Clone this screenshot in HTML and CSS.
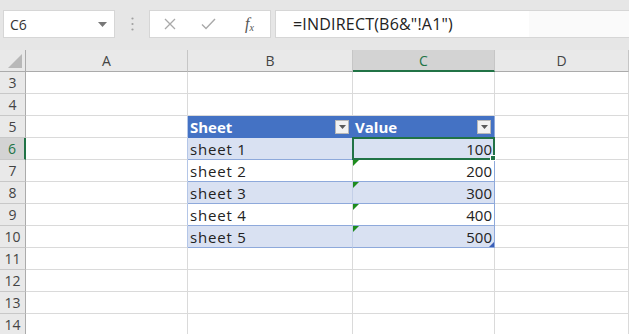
FILE: index.html
```html
<!DOCTYPE html>
<html lang="en">
<head>
<meta charset="utf-8">
<title>INDIRECT example</title>
<link rel="stylesheet" href="styles.css">
</head>
<body>
<div class="app">
  <div class="fbar">
    <div class="namebox">
      <span class="nb-text">C6</span>
      <svg class="nb-caret" width="9" height="5" viewBox="0 0 9 5"><path d="M0 0H9L4.5 5Z" fill="#777"/></svg>
    </div>
    <div class="grip">
      <svg width="3" height="14" viewBox="0 0 3 14"><circle cx="1.5" cy="1.5" r="1.1" fill="#a0a0a0"/><circle cx="1.5" cy="7" r="1.1" fill="#a0a0a0"/><circle cx="1.5" cy="12.5" r="1.1" fill="#a0a0a0"/></svg>
    </div>
    <div class="fxbox">
      <svg class="fx-btn" width="12" height="12" viewBox="0 0 12 12"><path d="M1 1L11 11M11 1L1 11" stroke="#a9a9a9" stroke-width="1.3" fill="none"/></svg>
      <svg class="fx-btn" width="15" height="12" viewBox="0 0 15 12"><path d="M1 6.5L5 10.5L14 1" stroke="#a9a9a9" stroke-width="1.4" fill="none"/></svg>
      <span class="fx-label"><i>f</i><sub>x</sub></span>
    </div>
    <div class="formula">
      <span class="formula-text">=INDIRECT(B6&amp;"!A1")</span>
      <span class="formula-rest"></span>
    </div>
  </div>

  <div class="sheet">
    <div class="c corner"><span class="corner-tri"></span></div>
    <div class="c ch">A</div>
    <div class="c ch">B</div>
    <div class="c ch ch-sel">C</div>
    <div class="c ch">D</div>

    <div class="c rh">3</div><div class="c"></div><div class="c"></div><div class="c"></div><div class="c"></div>
    <div class="c rh">4</div><div class="c"></div><div class="c"></div><div class="c"></div><div class="c"></div>

    <div class="c rh">5</div>
    <div class="c a-edge"></div>
    <div class="c th th-b"><span class="th-label">Sheet</span><span class="dd"><svg width="7" height="4" viewBox="0 0 7 4"><path d="M0 0H7L3.5 4Z" fill="#595959"/></svg></span></div>
    <div class="c th th-c"><span class="th-label">Value</span><span class="dd"><svg width="7" height="4" viewBox="0 0 7 4"><path d="M0 0H7L3.5 4Z" fill="#595959"/></svg></span></div>
    <div class="c"></div>

    <div class="c rh rh-sel">6</div>
    <div class="c a-edge"></div>
    <div class="c tb band">sheet 1</div>
    <div class="c tv band sel">100</div>
    <div class="c"></div>

    <div class="c rh">7</div>
    <div class="c a-edge"></div>
    <div class="c tb">sheet 2</div>
    <div class="c tv err">200</div>
    <div class="c"></div>

    <div class="c rh">8</div>
    <div class="c a-edge"></div>
    <div class="c tb band">sheet 3</div>
    <div class="c tv band err">300</div>
    <div class="c"></div>

    <div class="c rh">9</div>
    <div class="c a-edge"></div>
    <div class="c tb">sheet 4</div>
    <div class="c tv err">400</div>
    <div class="c"></div>

    <div class="c rh">10</div>
    <div class="c a-edge"></div>
    <div class="c tb band last">sheet 5</div>
    <div class="c tv band err last resize">500</div>
    <div class="c"></div>

    <div class="c rh">11</div><div class="c"></div><div class="c"></div><div class="c"></div><div class="c"></div>
    <div class="c rh">12</div><div class="c"></div><div class="c"></div><div class="c"></div><div class="c"></div>
    <div class="c rh">13</div><div class="c"></div><div class="c"></div><div class="c"></div><div class="c"></div>
    <div class="c rh">14</div><div class="c"></div><div class="c"></div><div class="c"></div><div class="c"></div>
  </div>
</div>
</body>
</html>
```

FILE: styles.css
```css
html, body {
  margin: 0;
  padding: 0;
  background: #ffffff;
}

body {
  font-family: "Open Sans", "Liberation Sans", sans-serif;
  overflow: hidden;
  width: 629px;
  height: 334px;
}

.app {
  display: flex;
  flex-direction: column;
  width: 629px;
  height: 334px;
  overflow: hidden;
}

/* ---------- formula bar ---------- */
.fbar {
  height: 50px;
  flex: none;
  background: #e6e6e6;
  box-sizing: border-box;
  padding: 10px 0 12px 3px;
  display: flex;
  align-items: stretch;
}

.namebox {
  width: 112px;
  box-sizing: border-box;
  background: #ffffff;
  border: 1px solid #d6d6d6;
  display: flex;
  align-items: center;
  padding: 0 6px 0 6px;
}

.nb-text {
  font-size: 14px;
  color: #333;
  flex: 1;
}

.nb-caret {
  margin-right: 1px;
}

.grip {
  width: 34px;
  display: flex;
  align-items: center;
  justify-content: center;
}

.fxbox {
  width: 122px;
  box-sizing: border-box;
  background: #ffffff;
  border: 1px solid #d6d6d6;
  display: flex;
  align-items: center;
  padding-left: 14px;
}

.fx-btn {
  margin-right: 29px;
}

.fx-btn:first-child {
  margin-right: 25px;
}

.fx-label {
  font-family: "Liberation Serif", "DejaVu Serif", serif;
  font-size: 16px;
  color: #555;
  line-height: 1;
}

.fx-label sub {
  font-size: 10px;
  font-style: italic;
  vertical-align: -2px;
}

.formula {
  flex: 1;
  margin-left: 4px;
  display: flex;
  align-items: stretch;
}

.formula-text {
  background: #ffffff;
  width: 254px;
  box-sizing: border-box;
  padding-left: 17px;
  display: flex;
  align-items: center;
  font-size: 16px;
  letter-spacing: 0.2px;
  color: #222;
  white-space: nowrap;
  border: 1px solid #d6d6d6;
  border-right: none;
}

.formula-rest {
  flex: 1;
  background: #fafafa;
  border: 1px solid #d6d6d6;
  border-left: none;
  border-right: none;
}

/* ---------- grid ---------- */
.sheet {
  flex: none;
  display: grid;
  grid-template-columns: 26px 162px 165px 142px 1fr;
  grid-auto-rows: 22px;
}

.c {
  box-sizing: border-box;
  border-right: 1px solid #dadada;
  border-bottom: 1px solid #dadada;
  display: flex;
  align-items: center;
  overflow: hidden;
  white-space: nowrap;
  font-size: 15px;
  color: #222;
  position: relative;
}

.ch, .rh, .corner {
  background: #e9e9e9;
  justify-content: center;
  color: #444;
}

.ch {
  font-size: 14px;
  border-right-color: #c6c6c6;
  border-bottom-color: #ababab;
}

.ch-sel {
  background: #d3d3d3;
  color: #217346;
  border-bottom: 2px solid #217346;
}

.rh {
  font-size: 14px;
  border-right-color: #ababab;
  border-bottom-color: #c8c8c8;
}

.rh-sel {
  background: #d3d3d3;
  color: #217346;
  border-right: 2px solid #217346;
}

.corner {
  border-right-color: #ababab;
  border-bottom-color: #ababab;
}

.corner-tri {
  position: absolute;
  right: 3px;
  bottom: 3px;
  width: 14px;
  height: 14px;
  background: #b8b8b8;
  clip-path: polygon(100% 0, 100% 100%, 0 100%);
}

/* ---------- table ---------- */
.a-edge {
  border-right-color: #b4c6e7;
}

.th {
  background: #4472c4;
  color: #ffffff;
  font-weight: bold;
  border-bottom-color: #4472c4;
  padding-left: 2px;
}

.th-b {
  border-right-color: #4472c4;
}

.th-c {
  border-right-color: #8ea9db;
}

.th-label {
  flex: 1;
}

.dd {
  width: 14px;
  height: 14px;
  box-sizing: border-box;
  background: #f2f2f2;
  border: 1px solid #b8b8b8;
  display: flex;
  align-items: center;
  justify-content: center;
  margin-right: 3px;
}

.tb {
  padding-left: 2px;
  letter-spacing: 0.8px;
  border-bottom-color: #8ea9db;
}

.tv {
  justify-content: flex-end;
  padding-right: 2px;
  border-bottom-color: #8ea9db;
  border-right-color: #8ea9db;
}

.band {
  background: #d9e1f2;
}

.tb.band {
  border-right-color: #c3cfe8;
}

.sel {
  overflow: visible;
  z-index: 2;
}

.sel::after {
  content: "";
  position: absolute;
  left: -1px;
  top: -1px;
  right: -1px;
  bottom: -1px;
  border: 2px solid #217346;
}

.sel::before {
  content: "";
  position: absolute;
  right: -2px;
  bottom: -2px;
  width: 6px;
  height: 6px;
  background: #217346;
  z-index: 2;
  border: 1px solid #ffffff;
  box-sizing: border-box;
}

.err::before {
  content: "";
  position: absolute;
  left: 0;
  top: 0;
  width: 6px;
  height: 6px;
  background: #1e8c1e;
  clip-path: polygon(0 0, 100% 0, 0 100%);
}

.resize::after {
  content: "";
  position: absolute;
  right: 0;
  bottom: 0;
  width: 5px;
  height: 5px;
  background: #3a5fb8;
  clip-path: polygon(100% 0, 100% 100%, 0 100%);
}
```
